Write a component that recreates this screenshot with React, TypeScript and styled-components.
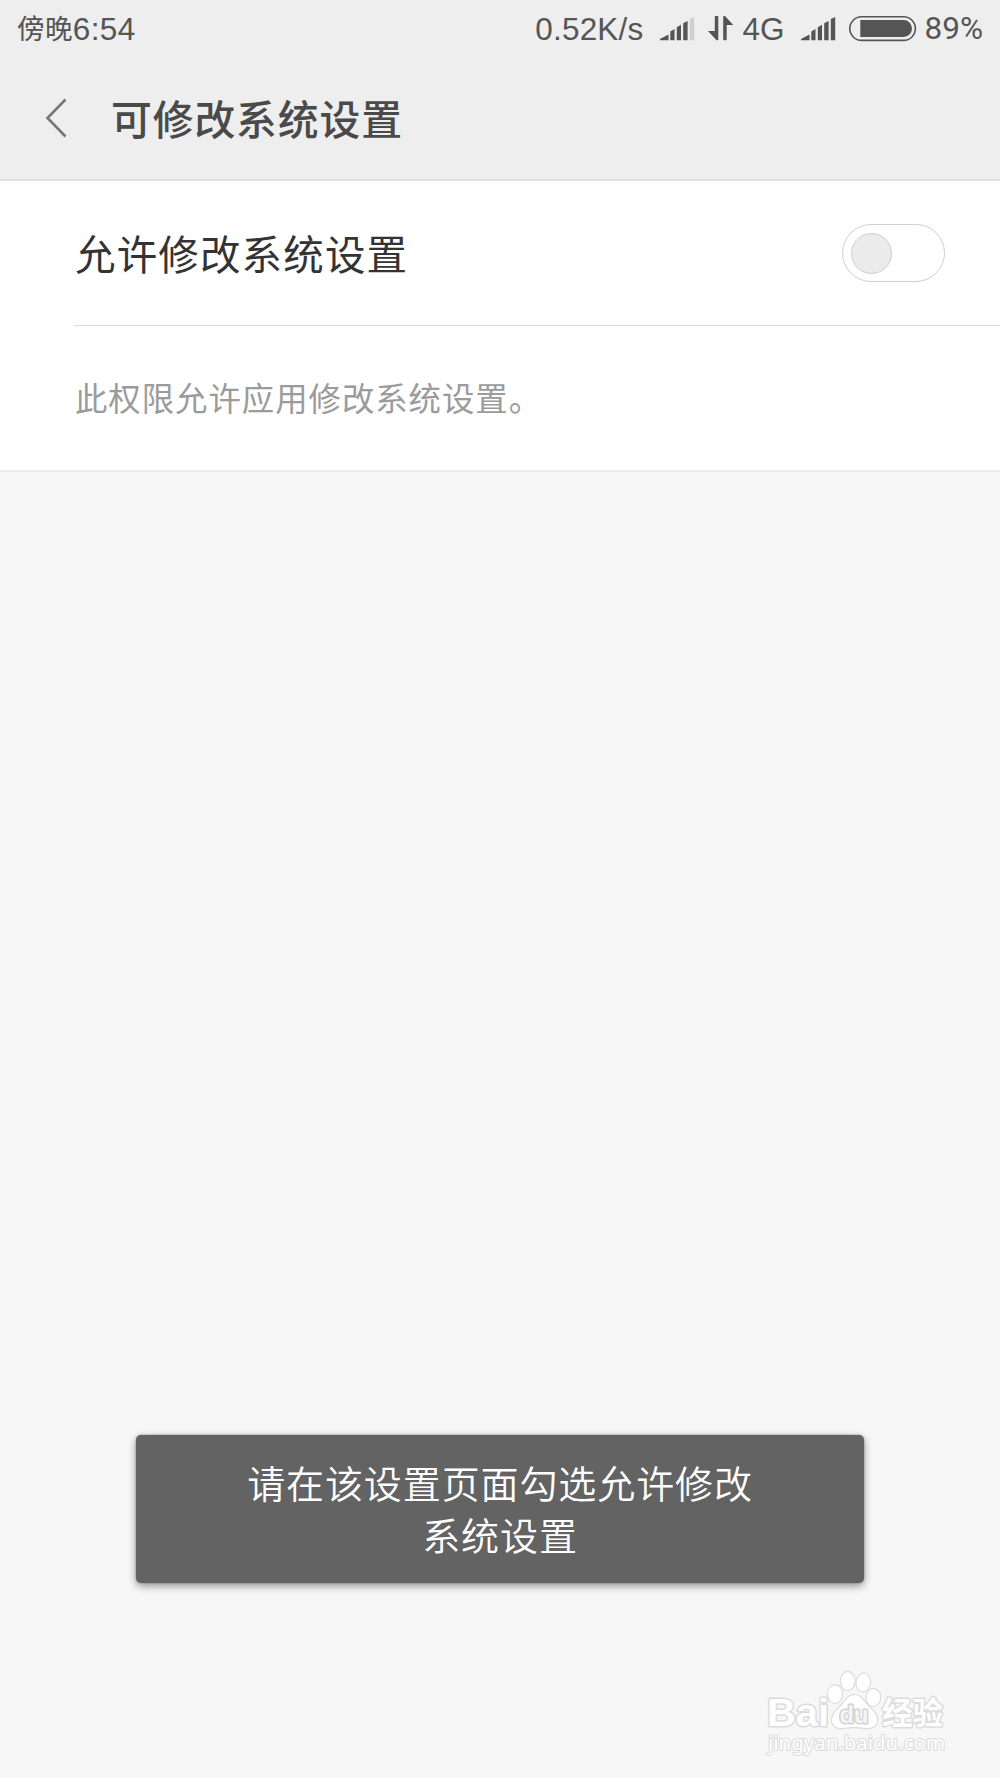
import React from "react";
import styled, { createGlobalStyle } from "styled-components";

const GlobalStyle = createGlobalStyle`
  * { box-sizing: border-box; }
  body { margin: 0; background: #f7f7f7; }
`;

const Screen = styled.div`
  display: flex;
  flex-direction: column;
  width: 1000px;
  height: 1778px;
  overflow: hidden;
  background: #f7f7f7;
  font-family: Roboto, "Noto Sans CJK SC", sans-serif;
`;

const Header = styled.header`
  height: 181px;
  background: #eeeeee;
  border-bottom: 2px solid #dfdfdf;
`;

const StatusBar = styled.div`
  display: flex;
  align-items: center;
  justify-content: space-between;
  height: 57px;
  padding: 0 17px 0 17px;
  color: #555;
`;

const StatusGroup = styled.div`
  display: flex;
  align-items: center;
`;

const StatusText = styled.span<{ $size?: number; $ml?: number; $spacing?: number; $grotesk?: boolean; $drop?: number }>`
  font-family: ${(p) => (p.$grotesk ? '"Liberation Sans"' : "Roboto")}, "Noto Sans CJK SC", sans-serif;
  font-size: ${(p) => p.$size ?? 31.5}px;
  line-height: 57px;
  margin-left: ${(p) => p.$ml ?? 0}px;
  padding-top: ${(p) => p.$drop ?? 0}px;
  letter-spacing: ${(p) => p.$spacing ?? 0}px;
  white-space: nowrap;
`;

const Glyph = styled.svg<{ $ml?: number }>`
  display: block;
  flex: none;
  margin-left: ${(p) => p.$ml ?? 0}px;
`;

const TitleBar = styled.div`
  display: flex;
  align-items: center;
  height: 122px;
  padding: 0 0 1px 44px;
`;

const Title = styled.h1`
  margin: 0 0 0 41px;
  padding-top: 7px;
  font-size: 40.8px;
  letter-spacing: 0.9px;
  font-weight: 500;
  line-height: 60px;
  color: #4a4a4a;
`;

const Panel = styled.section`
  height: 291px;
  padding-left: 74px;
  background: #fff;
  border-bottom: 2px solid #ececec;
`;

const SettingRow = styled.div`
  display: flex;
  align-items: center;
  justify-content: space-between;
  height: 145px;
  padding-right: 55px;
  border-bottom: 1px solid #dadada;
`;

const Label = styled.span`
  padding: 5px 0 0 1px;
  font-size: 40.5px;
  letter-spacing: 1.15px;
  line-height: 60px;
  color: #333;
`;

const Switch = styled.button`
  display: flex;
  align-items: center;
  width: 103px;
  height: 58px;
  padding: 0 8px;
  border: 1.5px solid #cfcfcf;
  border-radius: 29px;
  background: #fff;
`;

const Knob = styled.span`
  width: 41px;
  height: 41px;
  border: 1.5px solid #cdcdcd;
  border-radius: 50%;
  background: #ebebeb;
`;

const Description = styled.p`
  margin: 0;
  padding: 2px 0 0 1px;
  font-size: 32.4px;
  letter-spacing: 0.97px;
  line-height: 144px;
  color: #9b9b9b;
`;

const Lower = styled.main`
  display: flex;
  flex: 1;
  flex-direction: column;
  justify-content: flex-end;
`;

const Toast = styled.div`
  align-self: center;
  width: 728px;
  height: 148px;
  padding: 24px 100px 0 100px;
  border-radius: 5px;
  background: #636363;
  box-shadow: 0 3px 8px rgba(0, 0, 0, 0.4), 0 0 2px rgba(0, 0, 0, 0.4);
  color: #fff;
  font-size: 38px;
  font-weight: 350;
  letter-spacing: 0.9px;
  line-height: 52px;
  text-align: center;
`;

const Watermark = styled.footer`
  display: flex;
  flex-direction: column;
  align-items: flex-end;
  height: 195px;
  padding: 84px 50px 0 0;
`;

const signalBars = [
  "M0 23.3V22L8.5 17.5V23.3Z",
  "M10.3 23.3V14.5L14.5 12V23.3Z",
  "M16.8 23.3V10.2L21 7.8V23.3Z",
  "M23.2 23.3V6.2L27.6 4V23.3Z",
  "M29.8 23.3V2L34.2 0V23.3Z",
];

function Signal({ level, ml }: { level: number; ml: number }) {
  return (
    <Glyph $ml={ml} width="35" height="24" viewBox="0 0 35 24">
      {signalBars.map((d, i) => (
        <path key={d} d={d} fill={i < level ? "#555" : "#cfcfcf"} />
      ))}
    </Glyph>
  );
}

function Battery() {
  return (
    <Glyph $ml={13} width="68" height="26" viewBox="0 0 68 26">
      <rect x="0.8" y="0.8" width="65.6" height="23.6" rx="11.8" fill="none" stroke="#555" strokeWidth="1.6" />
      <path d="M11.3 4H54.5A8.5 8.5 0 0 1 54.5 21H11.3Z" fill="#555" />
    </Glyph>
  );
}

function PawLogo() {
  const face = '"Liberation Sans", "Noto Sans CJK SC", sans-serif';
  return (
    <svg width="184" height="92" viewBox="0 0 184 92" fill="#fff" stroke="#dcdcdc" paintOrder="stroke" strokeLinejoin="round">
      <g strokeWidth="2.4">
        <ellipse cx="69" cy="27" rx="7" ry="8.8" />
        <ellipse cx="81.7" cy="14" rx="6.7" ry="9" />
        <ellipse cx="97.3" cy="15.5" rx="6.7" ry="8.8" transform="rotate(10 97.3 15.5)" />
        <ellipse cx="107.3" cy="30.5" rx="6.8" ry="8.6" />
        <path d="M88 28C95 28 99 36 105 42C115 51 112 61 102 61C96 61 93 60 88 60C82 60 79 61 75 61C65 61 63 51 71 43C78 37 81 28 88 28Z" />
      </g>
      <g strokeWidth="3" fontFamily={face} fontWeight="700">
        <text x="1" y="58.5" fontSize="38.5" textLength="62" lengthAdjust="spacingAndGlyphs">Bai</text>
        <text x="73.5" y="55.5" fontSize="24" fill="#f4f4f4" stroke="#d2d2d2" textLength="29" lengthAdjust="spacingAndGlyphs">du</text>
        <text x="116" y="56.5" fontSize="31" textLength="61" lengthAdjust="spacingAndGlyphs">经验</text>
      </g>
      <text x="2" y="82.5" fontSize="20" strokeWidth="2.2" fontFamily='"Noto Sans", sans-serif' textLength="177" lengthAdjust="spacingAndGlyphs">
        jingyan.baidu.com
      </text>
    </svg>
  );
}

export default function App() {
  return (
    <Screen>
      <GlobalStyle />
      <Header>
        <StatusBar>
          <StatusGroup>
            <StatusText $size={27.6} $drop={2} $spacing={0.3}>傍晚</StatusText>
            <StatusText $grotesk $drop={1} $spacing={0.4}>6:54</StatusText>
          </StatusGroup>
          <StatusGroup>
            <StatusText $grotesk $drop={1} $spacing={0.2}>0.52K/s</StatusText>
            <Signal level={4} ml={17} />
            <Glyph $ml={13} width="26" height="25" viewBox="0 0 26 25" fill="#555">
              <path d="M6.8 0.7Q6.8 0 7.5 0H9.6Q10.3 0 10.3 0.7V23.5Q10.3 24.2 9.6 24.2H8.5L0 15H6.8Z" />
              <path d="M15.2 0.7Q15.2 0 16 0H17L25.3 9H18.7V23.5Q18.7 24.2 18 24.2H15.9Q15.2 24.2 15.2 23.5Z" />
            </Glyph>
            <StatusText $grotesk $drop={1} $ml={8}>4G</StatusText>
            <Signal level={5} ml={16} />
            <Battery />
            <StatusText $ml={8}>89%</StatusText>
          </StatusGroup>
        </StatusBar>
        <TitleBar>
          <Glyph width="26" height="42" viewBox="0 0 26 42">
            <path d="M21.5 2.5L3.5 21L21.5 39.5" fill="none" stroke="#777" strokeWidth="2.6" />
          </Glyph>
          <Title>可修改系统设置</Title>
        </TitleBar>
      </Header>
      <Panel>
        <SettingRow>
          <Label>允许修改系统设置</Label>
          <Switch type="button" role="switch" aria-checked={false}>
            <Knob />
          </Switch>
        </SettingRow>
        <Description>此权限允许应用修改系统设置。</Description>
      </Panel>
      <Lower>
        <Toast>请在该设置页面勾选允许修改系统设置</Toast>
        <Watermark>
          <PawLogo />
        </Watermark>
      </Lower>
    </Screen>
  );
}
